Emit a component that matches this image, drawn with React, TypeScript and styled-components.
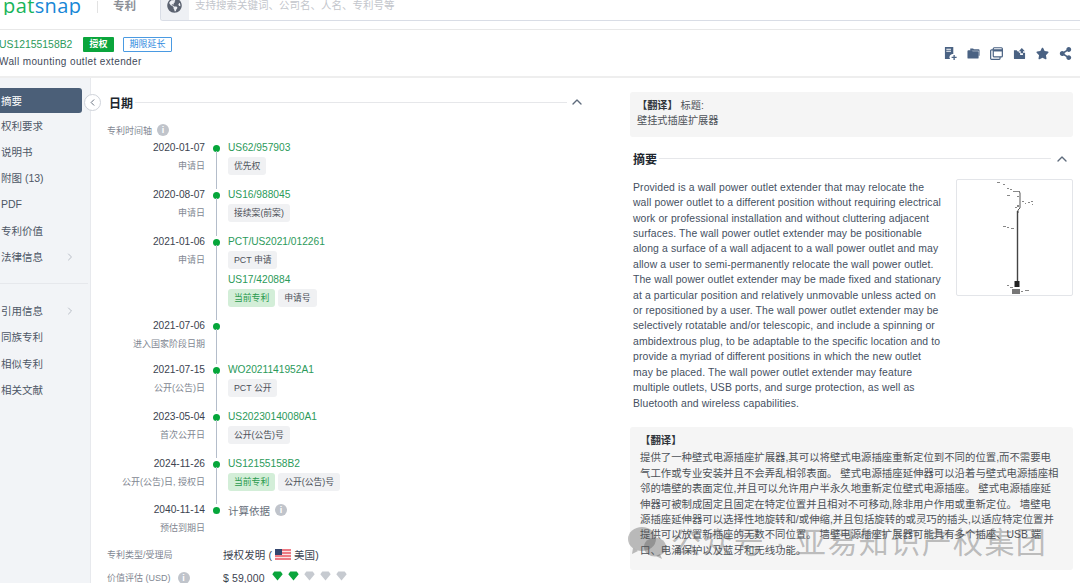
import React from "react";
import styled, {createGlobalStyle} from "styled-components";
import {FaGlobeAmericas, FaShareAlt, FaStar} from "react-icons/fa";
import {ChevronLeft, ChevronRight, ChevronUp} from "lucide-react";

const FONT = `"Liberation Sans", "Noto Sans CJK SC", sans-serif`;
const GREEN = "#2b9a5a";
const DOT = "#05a63a";

const Global = createGlobalStyle`
  html, body {
    margin: 0;
    padding: 0;
    background: #fff;
    font-family: ${FONT};
  }
`;

const Page = styled.div`
  position: relative;
  width: 1080px;
  height: 583px;
  overflow: hidden;
  background: #fff;
`;

const TopBar = styled.header`
  display: flex;
  align-items: flex-start;
  height: 29px;
  border-bottom: 1px solid #e8e8e8;
`;

const Logo = styled.div`
  width: 97px;
  height: 15px;
  padding-left: 3px;
  box-sizing: border-box;
  overflow: hidden;
  font-size: 20px;
  line-height: 11px;
  letter-spacing: 0.4px;
  font-family: "Open Sans", sans-serif;
  color: #1787d6;
  span {
    color: #19b45a;
  }
`;

const TopDivider = styled.div`
  width: 1px;
  height: 12px;
  background: #e2e2e2;
  margin-top: 1px;
`;

const Product = styled.div`
  width: 47px;
  padding-left: 15px;
  font-size: 11.5px;
  line-height: 13px;
  font-weight: 700;
  color: #8b8f96;
`;

const SearchBox = styled.div`
  display: flex;
  flex: 1;
  height: 21px;
  margin-top: -1px;
  border: 1px solid #d9dde6;
  border-top: 0;
  border-right: 0;
  border-bottom-left-radius: 3px;
  overflow: hidden;
`;

const GlobeCell = styled.div`
  width: 28px;
  background: #eef0f4;
  display: flex;
  justify-content: flex-start;
  padding-left: 6px;
  box-sizing: border-box;
  color: #5b6270;
  font-size: 15px;
  svg {
    margin-top: -1px;
  }
`;

const SearchHint = styled.div`
  padding-left: 6px;
  font-size: 10.5px;
  line-height: 13px;
  color: #c3c6cc;
`;

const TitleBar = styled.section`
  display: flex;
  justify-content: space-between;
  height: 46px;
  border-bottom: 2px solid #eeeeee;
`;

const TitleLeft = styled.div`
  margin-left: -1px;
  padding-top: 7px;
`;

const TitleRow = styled.div`
  display: flex;
  align-items: center;
  height: 15px;
`;

const PatentNo = styled.span`
  width: 84px;
  font-size: 10.4px;
  color: ${GREEN};
`;

const GrantTag = styled.span`
  width: 31px;
  height: 15px;
  background: #0aa53c;
  border-radius: 1px;
  color: #fff;
  font-size: 9px;
  font-weight: 700;
  line-height: 15px;
  text-align: center;
`;

const TermTag = styled.span`
  width: 47px;
  height: 13px;
  margin-left: 9px;
  border: 1px solid #4a9ae2;
  border-radius: 1px;
  color: #2f8ade;
  font-size: 9px;
  line-height: 13px;
  text-align: center;
`;

const PatentTitle = styled.div`
  margin-top: 3px;
  font-size: 10px;
  line-height: 14px;
  letter-spacing: 0.37px;
  color: #3f4a5a;
`;

const Tools = styled.div`
  display: flex;
  align-items: center;
  gap: 10px;
  height: 15px;
  padding: 16px 8px 0 0;
  color: #4a6283;
  svg {
    width: 13px;
    height: 13px;
    display: block;
  }
`;

const Body = styled.div`
  display: flex;
  height: 505px;
`;

const Side = styled.nav`
  flex: none;
  width: 90px;
  padding-top: 10px;
  background: #f2f4f7;
  border-right: 1px solid #e7e9ed;
`;

const SideItem = styled.div<{$active?: boolean}>`
  display: flex;
  align-items: center;
  justify-content: space-between;
  box-sizing: border-box;
  width: 82px;
  height: ${p => (p.$active ? "25px" : "26.2px")};
  padding: 0 6px 1px 1px;
  font-size: 10.5px;
  color: ${p => (p.$active ? "#fff" : "#4d5766")};
  background: ${p => (p.$active ? "#4b5f78" : "transparent")};
  border-radius: 0 3px 3px 0;
  svg {
    color: #b8bdc6;
    width: 12px;
    height: 12px;
  }
`;

const SideDivider = styled.div`
  width: 88px;
  height: 1px;
  margin: 13px 0 14px;
  background: #e6e8ec;
`;

const CollapseBtn = styled.div`
  position: absolute;
  left: 84px;
  top: 94px;
  width: 15px;
  height: 15px;
  display: flex;
  align-items: center;
  justify-content: center;
  background: #fff;
  border: 1px solid #cfd3da;
  border-radius: 50%;
  color: #5c6675;
  svg {
    width: 11px;
    height: 11px;
  }
`;

const LeftCol = styled.main`
  flex: none;
  width: 539px;
  padding: 16px 49px 0 18px;
  box-sizing: border-box;
`;

const Heading = styled.div`
  display: flex;
  align-items: center;
  height: 16px;
  font-size: 12px;
  font-weight: 700;
  color: #20262e;
  &::after {
    content: "";
    flex: 1;
    height: 1px;
    margin-left: 2px;
    background: #e6e7ea;
  }
  svg {
    order: 2;
    margin: 0 -4px 0 2px;
    width: 16px;
    height: 16px;
    color: #5e6b7c;
  }
`;

const FieldLabel = styled.div`
  display: flex;
  align-items: center;
  margin: 13px 0 0 -2px;
  height: 14px;
  font-size: 9px;
  color: #7f8792;
`;

const Info = styled.span`
  display: inline-flex;
  align-items: center;
  justify-content: center;
  width: 12px;
  height: 12px;
  margin-left: 5px;
  border-radius: 50%;
  background: #c0c4cb;
  color: #fff;
  font-size: 9px;
  font-weight: 700;
`;

const Timeline = styled.div`
  margin-top: 4px;
`;

const Row = styled.div<{$h: number}>`
  display: grid;
  grid-template-columns: 96px 22px 1fr;
  height: ${p => p.$h}px;
`;

const DateCell = styled.div`
  text-align: right;
`;

const DateText = styled.div`
  height: 14px;
  font-size: 10.2px;
  line-height: 14px;
  color: #3b4350;
`;

const DateKind = styled.div`
  margin-top: 5px;
  font-size: 9px;
  line-height: 12px;
  color: #7f8792;
  white-space: nowrap;
`;

const Rail = styled.div<{$last?: boolean}>`
  display: flex;
  flex-direction: column;
  align-items: center;
  &::after {
    content: "";
    flex: 1;
    width: 1px;
    background: ${p => (p.$last ? "transparent" : "#b4bdca")};
    margin-bottom: -1px;
  }
`;

const Dot = styled.i`
  flex: none;
  width: 7px;
  height: 7px;
  margin-top: 4px;
  margin-bottom: -1px;
  border-radius: 50%;
  background: ${DOT};
`;

const Entry = styled.div`
  min-width: 0;
  padding-left: 1px;
`;

const DocLink = styled.div`
  height: 14px;
  font-size: 10.2px;
  line-height: 14px;
  color: ${GREEN};
`;

const TagRow = styled.div`
  display: flex;
  gap: 3px;
  margin: 2px 0 4px;
`;

const DocTag = styled.span<{$current?: boolean}>`
  height: 18px;
  padding: 0 6px;
  border-radius: 3px;
  font-size: 8.8px;
  line-height: 18px;
  color: ${p => (p.$current ? "#2a9a4e" : "#4a4f57")};
  background: ${p => (p.$current ? "#d3eed8" : "#f0f1f3")};
  white-space: nowrap;
`;

const Basis = styled.div`
  display: flex;
  align-items: center;
  height: 14px;
  font-size: 10.5px;
  color: #666e7a;
`;

const Meta = styled.div`
  display: grid;
  grid-template-columns: 116px 1fr;
  align-items: center;
  height: 23px;
  margin-left: -2px;
`;

const MetaKey = styled.div`
  display: flex;
  align-items: center;
  font-size: 9px;
  color: #7f8792;
  span {
    margin-left: 7px;
  }
`;

const MetaValue = styled.div`
  display: flex;
  align-items: center;
  gap: 3px;
  font-size: 10.5px;
  letter-spacing: 0.1px;
  color: #3b4350;
`;

const Gems = styled.span`
  display: flex;
  gap: 5px;
  margin: -3px 0 0 4px;
`;

const RightCol = styled.aside`
  flex: none;
  width: 450px;
  padding: 14px 7px 0 0;
  box-sizing: border-box;
`;

const TransBox = styled.div`
  padding: 6px 7px 8px;
  background: #f5f5f5;
  border-radius: 3px;
  font-size: 10.2px;
  line-height: 15.4px;
  color: #4d5258;
  b {
    color: #30353b;
  }
`;

const SummaryHead = styled(Heading)`
  margin: 14px 3px 0 3px;
  &::after {
    margin-left: 2px;
  }
  svg {
    margin: 0 0 0 3px;
  }
`;

const Summary = styled.div`
  display: flex;
  justify-content: space-between;
  margin: 13px 0 16px 3px;
`;

const SummaryText = styled.p`
  margin: 0;
  width: 310px;
  font-size: 10.4px;
  line-height: 15.4px;
  letter-spacing: 0.12px;
  color: #45505f;
`;

const Thumb = styled.div`
  flex: none;
  width: 115px;
  height: 115px;
  margin-top: -1px;
  border: 1px solid #e3e5e9;
  border-radius: 2px;
  svg {
    display: block;
  }
`;

const LongTrans = styled(TransBox)`
  padding: 6px 12px 13px 10px;
  font-size: 10.4px;
  height: 124px;
  b {
    display: block;
    margin-bottom: 2px;
  }
`;

const Watermark = styled.div`
  position: absolute;
  left: 627px;
  top: 523px;
  display: flex;
  align-items: center;
  gap: 4px;
  font-size: 30px;
  letter-spacing: 1.4px;
  line-height: 40px;
  color: rgba(80, 80, 80, 0.36);
  white-space: nowrap;
  pointer-events: none;
`;

const Gem = ({on}: {on: boolean}) => (
  <svg width="11" height="10" viewBox="0 0 11 10">
    <path d="M2.3 0.5h6.4l2 2.7-5.2 6.3L.3 3.2z" fill={on ? "#0aa53c" : "#c6cad0"} />
  </svg>
);

const UsFlag = () => (
  <svg width="16" height="11" viewBox="0 0 16 11">
    <rect width="16" height="11" fill="#ee7a84" />
    <path d="M0 2.5h16M0 5.5h16M0 8.5h16" stroke="#fbe3e5" strokeWidth="1" />
    <rect width="7" height="6" fill="#34466f" />
  </svg>
);

const PdfIcon = () => (
  <svg viewBox="0 0 14 14" fill="currentColor">
    <path d="M1 0h9v7.5a3.5 3.5 0 0 0-3.5 5.5H1z" />
    <path d="M10.2 8.5h1.4v2h2v1.4h-2v2h-1.4v-2h-2v-1.4h2z" />
    <path d="M2.5 2h5v1h-5zM2.5 4h5v1h-5z" fill="#fff" />
  </svg>
);

const FoldersIcon = () => (
  <svg viewBox="0 0 14 14" fill="currentColor">
    <path d="M3.5 1.5h3l1 1h5a1 1 0 0 1 1 1v6h-1V4H3.5z" />
    <path d="M1.5 3.5h3.5l1 1.2h5.5a1 1 0 0 1 1 1v5.8a1 1 0 0 1-1 1h-10a1 1 0 0 1-1-1V4.5a1 1 0 0 1 1-1z" />
  </svg>
);

const WindowsIcon = () => (
  <svg viewBox="0 0 14 14" fill="none" stroke="currentColor" strokeWidth="1.3">
    <rect x="3.5" y="0.8" width="9.8" height="9.8" rx="1" />
    <path d="M3.5 3.6h9.8" strokeWidth="2.4" />
    <path d="M3.2 3.2H1.6a.9.9 0 0 0-.9.9v8.3c0 .5.4.9.9.9h8.3c.5 0 .9-.4.9-.9v-1.6" />
  </svg>
);

const FolderUpIcon = () => (
  <svg viewBox="0 0 14 14" fill="currentColor">
    <path d="M1 3.5h3l1 1.3h1.3v1.4h1.4V8.500h3V6.200H13v5.800a1 1 0 0 1-1 1H2a1 1 0 0 1-1-1z" />
    <path d="M9.500 1l3.300 3.600h-2v2.200H8.300V4.600h-2z" />
  </svg>
);

const specks: [number, number, number, number][] = [
  [40, 2, 3, 1], [46, 4, 2, 1], [50, 8, 2, 1], [53, 9, 2, 1], [56, 11, 6, 1], [50, 15, 3, 1],
  [60, 16, 2, 1], [65, 21, 2, 1], [68, 23, 1, 1], [71, 22, 2, 1], [74, 21, 2, 1], [75, 24, 1, 1],
  [46, 46, 3, 1], [50, 47, 2, 1], [54, 48, 3, 1], [50, 105, 2, 1], [53, 107, 3, 1], [64, 111, 2, 1],
  [68, 110, 4, 1], [58, 27, 2, 1], [60, 25, 2, 2],
];

const Drawing = () => (
  <svg width="115" height="115" viewBox="0 0 115 115">
    <path d="M62 11l1 2v15l-2 2v3" stroke="#555" strokeWidth="1" fill="none" />
    <path d="M60.500 31V102" stroke="#444" strokeWidth="1.400" />
    <rect x="57.500" y="101" width="5" height="6" fill="#222" />
    <rect x="55" y="109" width="8" height="5" fill="#777" />
    {specks.map(([x, y, w, h]) => (
      <rect key={`${x}-${y}`} x={x} y={y} width={w} height={h} fill="#888" />
    ))}
  </svg>
);

const WeChat = () => (
  <svg width="40" height="34" viewBox="0 0 40 34" fill="rgba(80,80,80,0.36)">
    <ellipse cx="15" cy="13" rx="14" ry="12" />
    <ellipse cx="28" cy="21" rx="11" ry="9.500" />
    <path d="M6 22l-1 6 6-3zM33 28l2 5-6-3z" />
  </svg>
);

const sideTop = ["权利要求", "说明书", "附图 (13)", "PDF", "专利价值"];
const sideBottom = ["同族专利", "相似专利", "相关文献"];

type Doc = {no: string; tags: {label: string; current?: boolean}[]};
type Event = {date: string; kind: string; h: number; docs: Doc[]; basis?: boolean};

const events: Event[] = [
  {date: "2020-01-07", kind: "申请日", h: 47, docs: [{no: "US62/957903", tags: [{label: "优先权"}]}]},
  {date: "2020-08-07", kind: "申请日", h: 47, docs: [{no: "US16/988045", tags: [{label: "接续案(前案)"}]}]},
  {
    date: "2021-01-06",
    kind: "申请日",
    h: 84,
    docs: [
      {no: "PCT/US2021/012261", tags: [{label: "PCT 申请"}]},
      {no: "US17/420884", tags: [{label: "当前专利", current: true}, {label: "申请号"}]},
    ],
  },
  {date: "2021-07-06", kind: "进入国家阶段日期", h: 44, docs: []},
  {date: "2021-07-15", kind: "公开(公告)日", h: 47, docs: [{no: "WO2021141952A1", tags: [{label: "PCT 公开"}]}]},
  {date: "2023-05-04", kind: "首次公开日", h: 47, docs: [{no: "US20230140080A1", tags: [{label: "公开(公告)号"}]}]},
  {
    date: "2024-11-26",
    kind: "公开(公告)日, 授权日",
    h: 46,
    docs: [{no: "US12155158B2", tags: [{label: "当前专利", current: true}, {label: "公开(公告)号"}]}],
  },
  {date: "2040-11-14", kind: "预估到期日", h: 40, docs: [], basis: true},
];

const App = () => {
  return (
    <Page>
      <Global />
      <TopBar>
        <Logo>
          <span>pat</span>snap
        </Logo>
        <TopDivider />
        <Product>专利</Product>
        <SearchBox>
          <GlobeCell>
            <FaGlobeAmericas />
          </GlobeCell>
          <SearchHint>支持搜索关键词、公司名、人名、专利号等</SearchHint>
        </SearchBox>
      </TopBar>
      <TitleBar>
        <TitleLeft>
          <TitleRow>
            <PatentNo>US12155158B2</PatentNo>
            <GrantTag>授权</GrantTag>
            <TermTag>期限延长</TermTag>
          </TitleRow>
          <PatentTitle>Wall mounting outlet extender</PatentTitle>
        </TitleLeft>
        <Tools>
          <PdfIcon />
          <FoldersIcon />
          <WindowsIcon />
          <FolderUpIcon />
          <FaStar />
          <FaShareAlt />
        </Tools>
      </TitleBar>
      <Body>
        <Side>
          <SideItem $active>摘要</SideItem>
          {sideTop.map(s => (
            <SideItem key={s}>{s}</SideItem>
          ))}
          <SideItem>
            法律信息
            <ChevronRight />
          </SideItem>
          <SideDivider />
          <SideItem>
            引用信息
            <ChevronRight />
          </SideItem>
          {sideBottom.map(s => (
            <SideItem key={s}>{s}</SideItem>
          ))}
        </Side>
        <LeftCol>
          <Heading>
            日期
            <ChevronUp />
          </Heading>
          <FieldLabel>
            专利时间轴
            <Info>i</Info>
          </FieldLabel>
          <Timeline>
            {events.map((ev, i) => (
              <Row key={ev.date} $h={ev.h}>
                <DateCell>
                  <DateText>{ev.date}</DateText>
                  <DateKind>{ev.kind}</DateKind>
                </DateCell>
                <Rail $last={i === events.length - 1}>
                  <Dot />
                </Rail>
                <Entry>
                  {ev.docs.map(d => (
                    <div key={d.no}>
                      <DocLink>{d.no}</DocLink>
                      <TagRow>
                        {d.tags.map(t => (
                          <DocTag key={t.label} $current={t.current}>
                            {t.label}
                          </DocTag>
                        ))}
                      </TagRow>
                    </div>
                  ))}
                  {ev.basis && (
                    <Basis>
                      计算依据
                      <Info>i</Info>
                    </Basis>
                  )}
                </Entry>
              </Row>
            ))}
          </Timeline>
          <Meta>
            <MetaKey>专利类型/受理局</MetaKey>
            <MetaValue>
              授权发明 ( <UsFlag /> 美国)
            </MetaValue>
          </Meta>
          <Meta>
            <MetaKey>
              价值评估 (USD)
              <Info>i</Info>
            </MetaKey>
            <MetaValue>
              $ 59,000
              <Gems>
                <Gem on />
                <Gem on />
                <Gem on={false} />
                <Gem on={false} />
                <Gem on={false} />
              </Gems>
            </MetaValue>
          </Meta>
        </LeftCol>
        <RightCol>
          <TransBox>
            <b>【翻译】</b> 标题:
            <br />
            壁挂式插座扩展器
          </TransBox>
          <SummaryHead>
            摘要
            <ChevronUp />
          </SummaryHead>
          <Summary>
            <SummaryText>
              Provided is a wall power outlet extender that may relocate the wall power outlet to a different position
              without requiring electrical work or professional installation and without cluttering adjacent surfaces.
              The wall power outlet extender may be positionable along a surface of a wall adjacent to a wall power
              outlet and may allow a user to semi-permanently relocate the wall power outlet. The wall power outlet
              extender may be made fixed and stationary at a particular position and relatively unmovable unless acted
              on or repositioned by a user. The wall power outlet extender may be selectively rotatable and/or
              telescopic, and include a spinning or ambidextrous plug, to be adaptable to the specific location and to
              provide a myriad of different positions in which the new outlet may be placed. The wall power outlet
              extender may feature multiple outlets, USB ports, and surge protection, as well as Bluetooth and wireless
              capabilities.
            </SummaryText>
            <Thumb>
              <Drawing />
            </Thumb>
          </Summary>
          <LongTrans>
            <b>【翻译】</b>
            提供了一种壁式电源插座扩展器,其可以将壁式电源插座重新定位到不同的位置,而不需要电气工作或专业安装并且不会弄乱相邻表面。
            壁式电源插座延伸器可以沿着与壁式电源插座相邻的墙壁的表面定位,并且可以允许用户半永久地重新定位壁式电源插座。
            壁式电源插座延伸器可被制成固定且固定在特定位置并且相对不可移动,除非用户作用或重新定位。
            墙壁电源插座延伸器可以选择性地旋转和/或伸缩,并且包括旋转的或灵巧的插头,以适应特定位置并提供可以放置新插座的无数不同位置。
            墙壁电源插座扩展器可能具有多个插座、USB 端口、电涌保护以及蓝牙和无线功能。
          </LongTrans>
        </RightCol>
      </Body>
      <CollapseBtn>
        <ChevronLeft />
      </CollapseBtn>
      <Watermark>
        <WeChat />
        公众号 · 亚易知识产权集团
      </Watermark>
    </Page>
  );
};

export default App;
